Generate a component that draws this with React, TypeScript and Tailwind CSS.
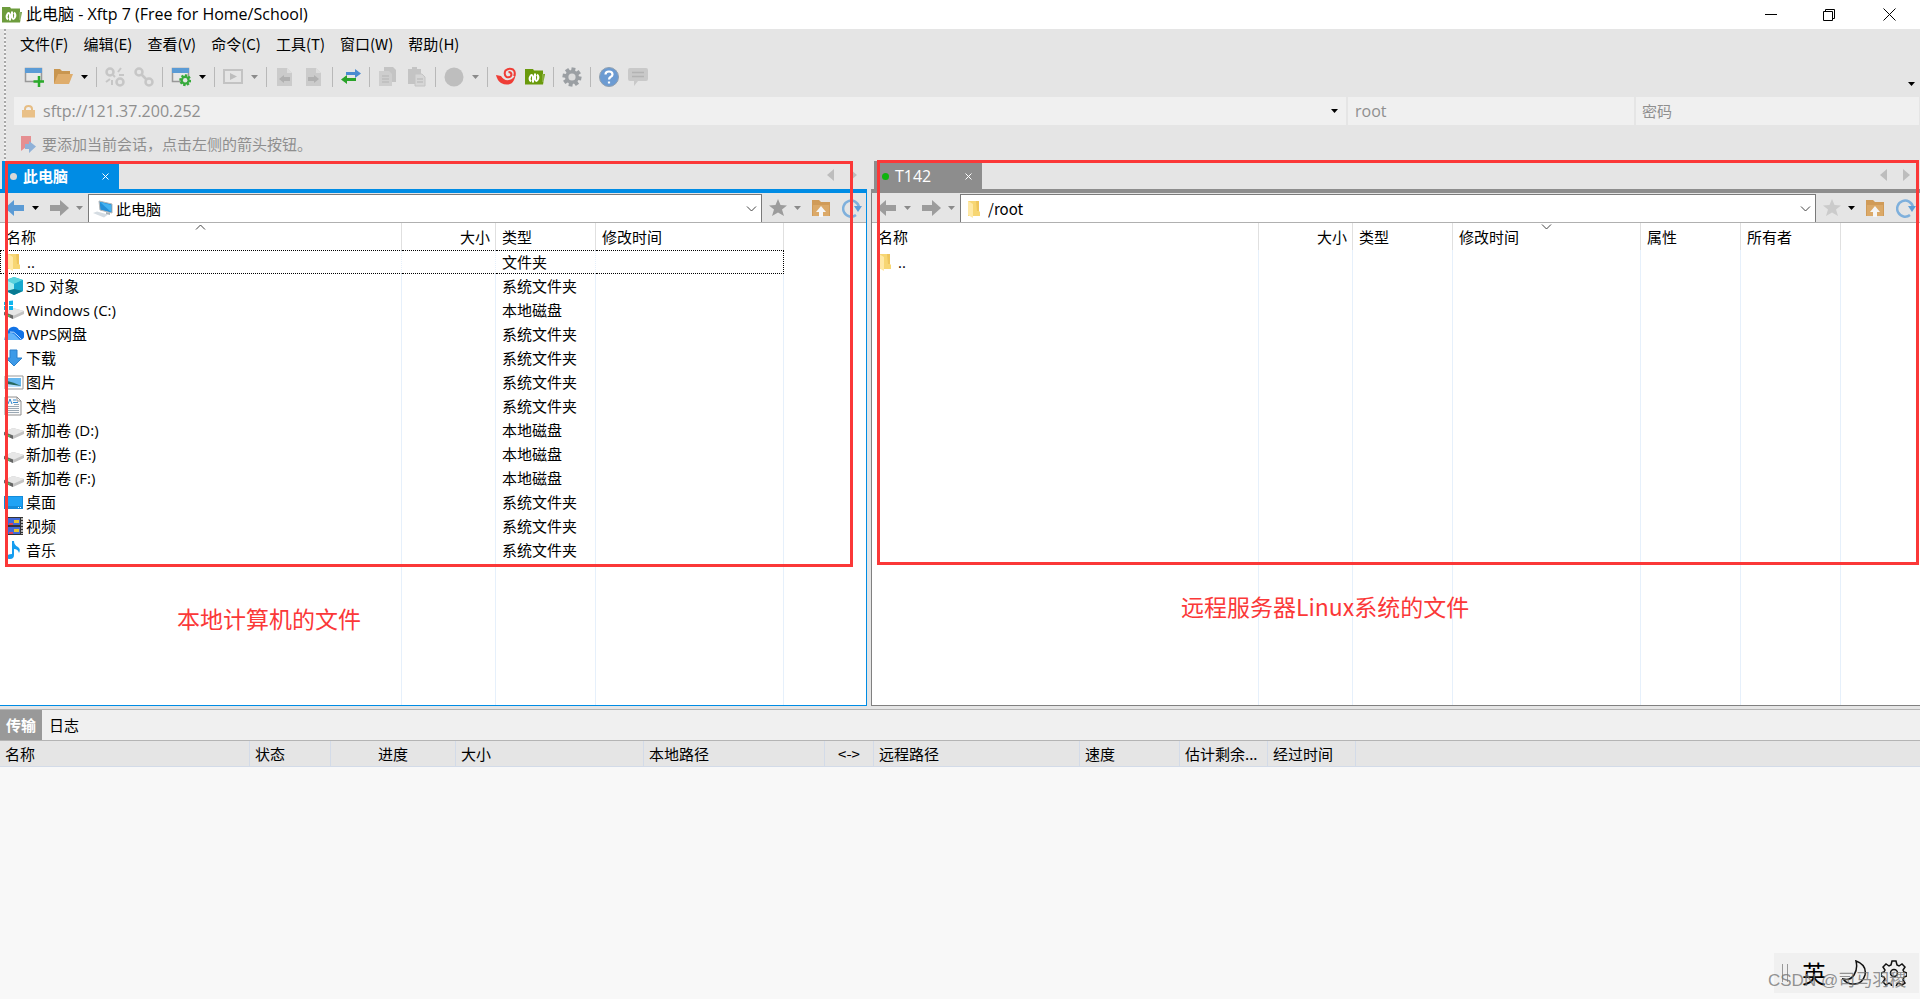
import React from "react";

const menus = ["文件(F)", "编辑(E)", "查看(V)", "命令(C)", "工具(T)", "窗口(W)", "帮助(H)"];

const localFiles = [
  { name: "..", type: "文件夹", icon: "folder" },
  { name: "3D 对象", type: "系统文件夹", icon: "cube" },
  { name: "Windows (C:)", type: "本地磁盘", icon: "windisk" },
  { name: "WPS网盘", type: "系统文件夹", icon: "cloud" },
  { name: "下载", type: "系统文件夹", icon: "download" },
  { name: "图片", type: "系统文件夹", icon: "picture" },
  { name: "文档", type: "系统文件夹", icon: "document" },
  { name: "新加卷 (D:)", type: "本地磁盘", icon: "disk" },
  { name: "新加卷 (E:)", type: "本地磁盘", icon: "disk" },
  { name: "新加卷 (F:)", type: "本地磁盘", icon: "disk" },
  { name: "桌面", type: "系统文件夹", icon: "desktop" },
  { name: "视频", type: "系统文件夹", icon: "video" },
  { name: "音乐", type: "系统文件夹", icon: "music" },
];

const remoteFiles = [{ name: "..", type: "", icon: "folder" }];

const localColumns = [
  { title: "名称", width: "w-[402px]", sort: "up" },
  { title: "大小", width: "w-[94px]", right: true },
  { title: "类型", width: "w-[100px]" },
  { title: "修改时间", width: "w-[188px]" },
];

const remoteColumns = [
  { title: "名称", width: "w-[387px]" },
  { title: "大小", width: "w-[94px]", right: true },
  { title: "类型", width: "w-[100px]" },
  { title: "修改时间", width: "w-[188px]", sort: "down" },
  { title: "属性", width: "w-[100px]" },
  { title: "所有者", width: "w-[100px]" },
];

const transferColumns = [
  { title: "名称", style: "w-[250px] pl-[5px] text-left" },
  { title: "状态", style: "w-[81px] pl-[5px] text-left" },
  { title: "进度", style: "w-[125px] text-center" },
  { title: "大小", style: "w-[188px] pl-[5px] text-left" },
  { title: "本地路径", style: "w-[181px] pl-[5px] text-left" },
  { title: "<->", style: "w-[49px] text-center" },
  { title: "远程路径", style: "w-[206px] pl-[5px] text-left" },
  { title: "速度", style: "w-[100px] pl-[5px] text-left" },
  { title: "估计剩余...", style: "w-[88px] pl-[5px] text-left" },
  { title: "经过时间", style: "w-[88px] pl-[5px] text-left" },
];

function Icon({ children, size = 20 }: { children: React.ReactNode; size?: number }) {
  return (
    <svg width={size} height={size} viewBox="0 0 20 20" fill="none" className="shrink-0">
      {children}
    </svg>
  );
}

function Gear({ color, hole }: { color: string; hole: string }) {
  return (
    <>
      {[0, 45, 90, 135].map((a) => (
        <rect key={a} x="8" y="0.5" width="4" height="19" fill={color} transform={`rotate(${a + 10} 10 10)`} />
      ))}
      <circle cx="10" cy="10" r="7" fill={color} />
      <circle cx="10" cy="10" r="3.6" fill={hole} />
    </>
  );
}

function FtpFolder({ color }: { color: string }) {
  return (
    <>
      <path d="M0 2h8l1 1.500h9V7h2l-2 10.500H0z" fill={color} />
      <path d="M18 7v8" stroke="#fff" strokeOpacity=".4" />
      <path d="M8 15.500V9.500Q7 7 5.500 9q-2 3 .5 5.500" stroke="#fff" strokeWidth="2" />
      <path d="M10 6.500v6q1 2.500 2.500.5 2-3-.5-5.500" stroke="#fff" strokeWidth="2" />
    </>
  );
}

function Disk() {
  return (
    <>
      <path d="M0 12l9-4 11 3v3l-11 5L0 15z" fill="#c3c3c3" />
      <path d="M0 12l9-4 11 3-10 4.500z" fill="#e7e7e7" />
      <path d="M0 12l9 3.500v3.500L0 15z" fill="#666" />
      <path d="M4 15.500l2 .7" stroke="#55c05b" strokeWidth="1.500" />
    </>
  );
}

function FileIcon({ name }: { name: string }) {
  return (
    <Icon>
      {name === "folder" && (
        <>
          <path d="M3 2h11v10l1 1v4H3z" fill="#f7d673" />
          <path d="M3 2l5 3v14l-5-3z" fill="#ffe9a6" />
          <path d="M11 2h3v10h-2z" fill="#eec55c" />
        </>
      )}
      {name === "cube" && (
        <>
          <path d="M10 1l9 3v11l-9 4-8-4V4z" fill="#1fb5cd" />
          <path d="M10 1l9 3-9 4-8-4z" fill="#59d3de" />
          <path d="M2 4l8 4v6l-8 1z" fill="#a8eef0" />
          <path d="M19 4l-9 4v6l9 1z" fill="#17a9cf" />
          <path d="M2 15l8-2 9 2-9 4z" fill="#087a92" />
        </>
      )}
      {name === "windisk" && (
        <>
          <Disk />
          <path d="M0 2l4-.5V5H0zM5 1l4-.5V5H5zM0 6h4v4H0zM5 6h4v4H5z" fill="#10b5ee" />
        </>
      )}
      {name === "disk" && <Disk />}
      {name === "cloud" && (
        <>
          <path d="M5 16a5 5 0 0 1-1-9 6 6 0 0 1 11-1 5 5 0 0 1 1 10z" fill="#1273e6" />
          <path d="M0 16q1-7 7-7 3 0 5 3l4 4z" fill="#63b4fa" />
          <path d="M6 8q4-1 7 3l4 4" stroke="#c2e2ff" />
        </>
      )}
      {name === "download" && <path d="M6 2h7v8h5l-8 8-8-8h4z" fill="#3d9ae8" stroke="#2b7fca" />}
      {name === "picture" && (
        <>
          <path d="M1 4h18v13H1z" fill="#fff" stroke="#999" />
          <path d="M3 6h14v9H3z" fill="#66b7ee" />
          <path d="M3 9q6 1 14 5v1H3z" fill="#27685e" />
          <path d="M3 12l14 2v1H3z" fill="#b8dfff" />
        </>
      )}
      {name === "document" && (
        <>
          <path d="M1 1h12l4 4v14H1z" fill="#fafafa" stroke="#909090" />
          <path d="M13 1v4h4" stroke="#909090" />
          <path d="M3 10.500h12M3 12.500h12M3 14.500h12M3 16.500h12M10 8.500h5" stroke="#9aa8b4" />
          <path d="M4 8l2-5 2 5M9 4h3M9 6.500h5" stroke="#3188ce" />
        </>
      )}
      {name === "desktop" && (
        <>
          <path d="M0 4h19v13H0z" fill="#148cda" />
          <path d="M1 5h17v9H1z" fill="#20a3f5" />
          <path d="M14 15.500h1M16 15.500h1" stroke="#fff" />
        </>
      )}
      {name === "video" && (
        <>
          <path d="M1 1h18v18H1z" fill="#333" />
          <path d="M3 2h13v7H3zM3 11h13v7H3z" fill="#4269d8" />
          <path d="M10 4h5v3h-5zM10 13h5v3h-5z" fill="#e5c32f" />
          <path d="M5 7h4v2H5zM5 16h4v2H5z" fill="#df4256" />
          <path d="M18 2v16" stroke="#ddd" strokeWidth="1.500" strokeDasharray="2 1" />
        </>
      )}
      {name === "music" && (
        <path d="M8 1h2q0 4 4 6 3 2 1 6-1-4-5-4v6q0 4-4 4-3 0-3-2 0-3 5-3z" fill="#159df0" />
      )}
    </Icon>
  );
}

function ToolIcon({ name }: { name: string }) {
  return (
    <Icon>
      {(name === "new" || name === "props") && (
        <>
          <path d="M1.500 1.500h16v13h-16z" fill="#e8e8e8" stroke="#999" strokeWidth="1.500" />
          <path d="M1 1h17v5H1z" fill="#5b9bd5" />
          {name === "new" ? (
            <path d="M15 9v11M9.500 14.500h11" stroke="#2bab2b" strokeWidth="2.500" />
          ) : (
            <g transform="translate(8 7) scale(.62)">
              <Gear color="#37ab3c" hole="#e5e5e5" />
            </g>
          )}
        </>
      )}
      {name === "open" && (
        <>
          <path d="M1 17V2h6l2 2h8v4" fill="#c99650" />
          <path d="M1 17L5 7h15l-4 10z" fill="#dfad6c" />
        </>
      )}
      {(name === "link" || name === "unlink") && (
        <g stroke="#c6c6c6" strokeWidth="2.500">
          <circle cx="5" cy="5" r="3.500" />
          <circle cx="15" cy="15" r="3.500" />
          {name === "link" ? (
            <path d="M7 7l6 6" />
          ) : (
            <path d="M8 8l2 2M13 5l3-4M14 8h5M5 12l-4 3M7 13v5" strokeWidth="2" />
          )}
        </g>
      )}
      {name === "play" && (
        <>
          <rect x="1" y="3" width="18" height="13" stroke="#c3c3c3" strokeWidth="2" />
          <path d="M7 6l7 3.500L7 13z" fill="#bdbdbd" />
        </>
      )}
      {(name === "docleft" || name === "docright") && (
        <>
          <path d="M2 1h10l5 5v13H2z" fill="#cbcbcb" />
          <path d="M12 1v5h5" fill="#dedede" />
          {name === "docleft" ? (
            <path d="M4 12l5-4v2h6v4H9v2z" fill="#b0b0b0" />
          ) : (
            <path d="M15 12l-5-4v2H4v4h6v2z" fill="#b0b0b0" />
          )}
        </>
      )}
      {name === "transfer" && (
        <>
          <path d="M5 5h9V2l6 4.500-6 4.500V8H5z" fill="#4a8bd0" />
          <path d="M15 11H6V8l-6 4.500L6 17v-3h9z" fill="#29a329" />
        </>
      )}
      {name === "copy" && (
        <>
          <path d="M6 0h9l3 3v12H6z" fill="#c4c4c4" />
          <path d="M1 4h10l3 3v12H1z" fill="#cecece" />
          <path d="M4 9h7M4 12h7M4 15h7" stroke="#b4b4b4" />
        </>
      )}
      {name === "paste" && (
        <>
          <path d="M1 2h13v15H1zM5 0h5v4H5z" fill="#c4c4c4" />
          <path d="M8 7h7l3 3v9H8z" fill="#d6d6d6" stroke="#c4c4c4" />
          <path d="M10 12h6M10 15h6" stroke="#b4b4b4" />
        </>
      )}
      {name === "globe" && <circle cx="10" cy="10" r="9.500" fill="#bebebe" />}
      {name === "swirl" && (
        <>
          <path d="M0 8l5 1q3 5 8 4 5-1 7-7-1 7-4 10-5 3-11 0Q1 13 0 8z" fill="#ef3d36" />
          <path
            d="M18 9q2-4-1-6.500-4-2-7.500 1-2 4 1 6.500 4 1 5-2 0-3-3-3"
            stroke="#ef3d36"
            strokeWidth="2"
          />
        </>
      )}
      {name === "ftp" && <FtpFolder color="#6a9a0c" />}
      {name === "gear" && <Gear color="#9b9fa3" hole="#dcdcdc" />}
      {name === "help" && (
        <>
          <circle cx="10" cy="10" r="9.500" fill="#6c9bd2" stroke="#8f9fb0" />
          <path d="M6.500 7.500q0-3 3.500-3t3.500 3q0 1.500-2 2.500-1.500 1-1.500 2.500M10 14.500v2" stroke="#fff" strokeWidth="2.200" />
        </>
      )}
      {name === "chat" && (
        <>
          <path d="M2 1h16q2 0 2 2v9q0 2-2 2h-8l-4 5v-5H2q-2 0-2-2V3q0-2 2-2z" fill="#c9c9c9" />
          <path d="M4 5.500h12M4 9.500h12" stroke="#b3b3b3" strokeWidth="1.500" />
        </>
      )}
      {name === "back" && <path d="M0 10l9-8v5h10v6H9v5z" fill="currentColor" />}
      {name === "forward" && <path d="M20 10l-9-8v5H1v6h10v5z" fill="currentColor" />}
      {name === "star" && <path d="M10 1l2.500 6 6.500.5-5 4 2 6.500-6-3.500L4 18l2-6.500-5-4L7.500 7z" fill="currentColor" />}
      {name === "up" && (
        <>
          <path d="M1 2h7l2 2h9v14H1z" fill="#d09b58" />
          <path d="M2 7h16v11H2z" fill="#dba968" />
          <path d="M10 8l5 6h-3v5H8v-5H5z" fill="#f5f5f5" />
        </>
      )}
      {name === "refresh" && (
        <>
          <path d="M14 17a8 8 0 1 1 3-8" stroke="#7fb0dc" strokeWidth="2.500" />
          <path d="M12 8h8l-4 6z" fill="#5f9fd8" />
        </>
      )}
    </Icon>
  );
}

function Caret({ dim = false, width = "w-[15px]" }: { dim?: boolean; width?: string }) {
  return (
    <button aria-label="更多" className={`flex ${width} shrink-0 justify-center ${dim ? "text-[#8a8a8a]" : "text-black"}`}>
      <svg width="7" height="4" viewBox="0 0 7 4">
        <path d="M0 0h7L3.500 4z" fill="currentColor" />
      </svg>
    </button>
  );
}

function Tool({ name, label }: { name: string; label: string }) {
  return (
    <button aria-label={label} className="flex w-[29px] shrink-0 justify-center">
      <ToolIcon name={name} />
    </button>
  );
}

function Separator() {
  return (
    <div className="flex w-2 justify-center">
      <div className="h-5 w-px bg-[#b8b8b8]" />
    </div>
  );
}

function Chevron({ up = false }: { up?: boolean }) {
  return (
    <svg width="11" height="6" viewBox="0 0 11 6" fill="none" stroke="#444">
      {up ? <path d="M1 5.500l4.500-4.500L10 5.500" /> : <path d="M1 .5L5.500 5 10 .5" />}
    </svg>
  );
}

function FileTable({ columns, files, focused = false }: any) {
  return (
    <table className="h-full w-full table-fixed border-separate border-spacing-0">
      <thead>
        <tr className="h-[27px]">
          {columns.map((col: any) => (
            <th
              key={col.title}
              scope="col"
              className={`relative border-r border-[#e0e0e0] pl-1.5 pr-[5px] font-normal ${col.width} ${
                col.right ? "text-right" : "text-left"
              }`}
            >
              {col.title}
              {col.sort && (
                <span className="absolute inset-x-0 top-px flex justify-center">
                  <Chevron up={col.sort === "up"} />
                </span>
              )}
            </th>
          ))}
          <th aria-hidden="true" />
        </tr>
      </thead>
      <tbody>
        {files.map((file: any, index: number) => {
          const focus = focused && index === 0;
          const line = focus ? "border-y border-y-black border-dotted" : "";
          return (
            <tr key={file.name} className="h-6">
              <td className={`border-r border-r-[#e6f0fb] ${line} ${focus ? "border-l border-l-black" : ""}`}>
                <div className="flex items-center gap-0.5 pl-1">
                  <FileIcon name={file.icon} />
                  <span className="whitespace-pre font-['Open_Sans','Noto_Sans_CJK_SC',sans-serif]">{file.name}</span>
                </div>
              </td>
              <td className={`border-r border-r-[#e6f0fb] ${line}`} />
              <td className={`border-r border-r-[#e6f0fb] pl-1.5 ${line}`}>{file.type}</td>
              {columns.slice(3).map((col: any) => (
                <td key={col.title} className={`border-r ${focus ? "border-r-black" : "border-r-[#e6f0fb]"} ${line}`} />
              ))}
              <td />
            </tr>
          );
        })}
        <tr aria-hidden="true">
          {columns.map((col: any) => (
            <td key={col.title} className="border-r border-[#e6f0fb]" />
          ))}
          <td />
        </tr>
      </tbody>
    </table>
  );
}

function Pane({ local, children }: { local: boolean; children: React.ReactNode }) {
  return (
    <section className={`relative flex min-w-0 flex-col ${local ? "flex-[867]" : "flex-[1049]"}`}>
      <div
        className={`flex h-8 shrink-0 items-stretch justify-between border-b-4 ${
          local ? "border-[#008ce4]" : "border-[#8d8d8d]"
        }`}
      >
        <div
          className={`flex items-center pl-2 pt-0.5 text-white ${
            local ? "ml-0.5 w-[117px] bg-[#008ce4] font-bold" : "ml-[3px] w-[108px] bg-[#8d8d8d]"
          }`}
        >
          <span className={`mr-1.5 size-[7px] rounded-full ${local ? "bg-[#d8d8d8]" : "bg-[#0db40d]"}`} />
          <button className={`flex-1 text-left ${local ? "" : "font-['Open_Sans',sans-serif] text-base"}`}>
            {local ? "此电脑" : "T142"}
          </button>
          <button aria-label="关闭标签" className="mr-2.5">
            <svg width="7" height="7" viewBox="0 0 7 7" stroke="#fff">
              <path d="M.5.5l6 6M6.500.5l-6 6" />
            </svg>
          </button>
        </div>
        <div className="flex items-center gap-4 pr-2.5 text-[#bdbdbd]">
          <button aria-label="上一个">
            <svg width="7" height="12" viewBox="0 0 7 12">
              <path d="M7 0v12L0 6z" fill="currentColor" />
            </svg>
          </button>
          <button aria-label="下一个">
            <svg width="7" height="12" viewBox="0 0 7 12">
              <path d="M0 0v12l7-6z" fill="currentColor" />
            </svg>
          </button>
        </div>
      </div>
      <div
        className={`flex min-h-0 flex-1 flex-col border-b bg-white ${
          local ? "border-r border-[#008ce4]" : "border-l border-[#808080]"
        }`}
      >
        <div className="flex h-[30px] shrink-0 items-center border-b border-[#b0b0b0] bg-[#e5e5e5]">
          <div className="flex w-[88px] items-center pl-0.5 text-[#9c9c9c]">
            <button aria-label="后退" className={`flex w-[26px] justify-center ${local ? "text-[#5b9bd5]" : ""}`}>
              <ToolIcon name="back" />
            </button>
            <Caret dim={!local} />
            <button aria-label="前进" className="flex w-8 justify-center">
              <ToolIcon name="forward" />
            </button>
            <Caret dim width="w-2" />
          </div>
          <div className="mt-px flex h-7 flex-1 items-center border-x border-t border-[#7a7a7a] bg-white pl-1 pr-1">
            {local ? (
              <Icon>
                <path d="M6 2l13 3v9L7 11z" fill="#248fd8" stroke="#b7b7b7" />
                <path d="M7 3l11 3v7z" fill="#45b3f2" />
                <path d="M0 14l4-1.500 11 3-4 3z" fill="#d5dce2" />
                <path d="M13 13l4 1v2l-4-1z" fill="#a8b3ba" />
              </Icon>
            ) : (
              <FileIcon name="folder" />
            )}
            <input
              aria-label={local ? "本地路径" : "远程路径"}
              defaultValue={local ? "此电脑" : "/root"}
              className="min-w-0 flex-1 bg-transparent pl-[3px] outline-none"
            />
            <button aria-label="展开">
              <Chevron />
            </button>
          </div>
          <div className="flex w-[104px] items-center">
            <button aria-label="收藏" className={`flex w-8 justify-center ${local ? "text-[#9c9c9c]" : "text-[#cbcbcb]"}`}>
              <ToolIcon name="star" />
            </button>
            <Caret dim={local} width="w-[7px]" />
            <button aria-label="上级目录" className="flex w-10 justify-center">
              <ToolIcon name="up" />
            </button>
            <button aria-label="刷新" className="flex w-[22px] justify-center">
              <ToolIcon name="refresh" />
            </button>
          </div>
        </div>
        <div className="min-h-0 flex-1">{children}</div>
      </div>
    </section>
  );
}

export default function App() {
  return (
    <div className="relative flex min-h-screen flex-col bg-[#e5e5e5] font-['Noto_Sans_CJK_SC',sans-serif] text-[15px] leading-[22px] text-black">
      <header className="flex h-[29px] shrink-0 items-center bg-white pl-0.5">
        <Icon>
          <FtpFolder color="#6d9c3d" />
        </Icon>
        <h1 className="flex-1 pb-0.5 pl-1 font-['Open_Sans','Noto_Sans_CJK_SC',sans-serif] text-base leading-6">
          此电脑 - Xftp 7 (Free for Home/School)
        </h1>
        <div className="flex">
          <button aria-label="最小化" className="flex w-[58px] items-center justify-center">
            <svg width="12" height="12" viewBox="0 0 12 12" stroke="#000">
              <path d="M0 5.500h12" />
            </svg>
          </button>
          <button aria-label="还原" className="flex w-[58px] items-center justify-center">
            <svg width="12" height="12" viewBox="0 0 12 12" fill="none" stroke="#000">
              <path d="M.5 2.500h9v9h-9zM2.500 2.500v-2h9v9h-2" />
            </svg>
          </button>
          <button aria-label="关闭" className="flex w-[62px] items-center justify-center">
            <svg width="13" height="13" viewBox="0 0 13 13" stroke="#000">
              <path d="M.5.5l12 12M12.500.5l-12 12" />
            </svg>
          </button>
        </div>
      </header>

      <div className="flex h-[132px] shrink-0">
        <div className="ml-1 w-0.5 bg-[repeating-linear-gradient(to_bottom,#a8a8a8_0_2px,#f4f4f4_2px_4px)]" />
        <div className="flex min-w-0 flex-1 flex-col">
          <nav className="flex h-[30px] items-center gap-[15px] pl-3.5">
            {menus.map((menu) => (
              <button key={menu}>{menu}</button>
            ))}
          </nav>
          <div className="flex h-9 items-center pl-[13px]">
            <Tool name="new" label="新建" />
            <Tool name="open" label="打开" />
            <Caret />
            <Separator />
            <Tool name="unlink" label="断开" />
            <Tool name="link" label="重新连接" />
            <Separator />
            <Tool name="props" label="属性" />
            <Caret />
            <Separator />
            <Tool name="play" label="运行" />
            <Caret dim />
            <Separator />
            <Tool name="docleft" label="向左传输" />
            <Tool name="docright" label="向右传输" />
            <Separator />
            <Tool name="transfer" label="传输" />
            <Separator />
            <Tool name="copy" label="复制" />
            <Tool name="paste" label="粘贴" />
            <Separator />
            <Tool name="globe" label="编码" />
            <Caret dim />
            <Separator />
            <Tool name="swirl" label="Xshell" />
            <Tool name="ftp" label="Xftp" />
            <Separator />
            <Tool name="gear" label="选项" />
            <Separator />
            <Tool name="help" label="帮助" />
            <Tool name="chat" label="反馈" />
            <div className="flex flex-1 justify-end pr-px pt-3.5">
              <Caret />
            </div>
          </div>
          <form className="mt-0.5 flex h-7 gap-0.5 pl-2 pr-px font-['Open_Sans','Noto_Sans_CJK_SC',sans-serif] text-base text-[#8f8f8f]">
            <div className="flex flex-[1320] items-center bg-[#f0f0f0] pl-2 pr-1">
              <svg width="13" height="13" viewBox="0 0 13 13" fill="none">
                <path d="M3 6V4q0-3 3.500-3T10 4v2" stroke="#e6bd84" strokeWidth="2" />
                <path d="M0 5h13v7.500H0z" fill="#e9c087" />
              </svg>
              <input
                aria-label="地址"
                defaultValue="sftp://121.37.200.252"
                className="min-w-0 flex-1 bg-transparent pl-2 outline-none"
              />
              <Caret />
            </div>
            <input aria-label="用户名" defaultValue="root" className="min-w-0 flex-[279] bg-[#f0f0f0] pl-[7px] outline-none" />
            <input
              aria-label="密码"
              placeholder="密码"
              className="min-w-0 flex-[277] bg-[#f0f0f0] pl-1.5 text-[15px] outline-none placeholder:text-[#8f8f8f]"
            />
          </form>
          <div className="flex flex-1 items-center gap-1.5 pl-3.5 pt-0.5 text-[#8f8f8f]">
            <svg width="16" height="17" viewBox="0 0 16 17">
              <path d="M1 0h10v7l-5 4-5 4z" fill="#e58f91" />
              <path d="M5 8h4V5l7 5.500L9 17v-4H5z" fill="#8fb1d8" />
            </svg>
            <p>要添加当前会话，点击左侧的箭头按钮。</p>
          </div>
        </div>
      </div>

      <main className="flex min-h-[420px] grow-[546] basis-0 gap-1">
        <Pane local>
          <FileTable columns={localColumns} files={localFiles} focused />
          <div className="pointer-events-none absolute bottom-[139px] left-[5px] right-3.5 top-0 border-[3px] border-[#fb3838]" />
          <p className="absolute left-[177px] top-[440px] text-[23px] leading-[34px] text-[#fb3838]">本地计算机的文件</p>
        </Pane>
        <Pane local={false}>
          <FileTable columns={remoteColumns} files={remoteFiles} />
          <div className="pointer-events-none absolute -top-px bottom-[141px] left-1.5 right-px border-[3px] border-[#fb3838]" />
          <p className="absolute left-[310px] top-[428px] text-[23px] leading-[34px] text-[#fb3838]">
            远程服务器Linux系统的文件
          </p>
        </Pane>
      </main>

      <section className="mt-[3px] flex min-h-[200px] grow-[289] basis-0 flex-col border-t border-[#b4b4b4] bg-[#f8f8f8]">
        <div className="flex h-[31px] shrink-0 border-b border-[#b4b4b4] bg-[#f0f0f0]">
          <button className="w-[42px] bg-[#999] font-bold text-white">传输</button>
          <button className="px-[7px]">日志</button>
        </div>
        <table className="w-full table-fixed border-separate border-spacing-0 bg-[#e5e5e5]">
          <thead>
            <tr className="h-[26px]">
              {transferColumns.map((col) => (
                <th
                  key={col.title}
                  scope="col"
                  className={`whitespace-nowrap border-b border-r border-[#d3dbe8] font-normal ${col.style}`}
                >
                  {col.title}
                </th>
              ))}
              <th aria-hidden="true" className="border-b border-[#d3dbe8]" />
            </tr>
          </thead>
        </table>
      </section>

      <aside className="absolute bottom-1.5 right-px flex h-10 w-[145px] items-center bg-[#f0f0f0] pl-2">
        <div className="h-[18px] w-1.5 border-x border-[#999]" />
        <button className="ml-3.5 text-2xl leading-8">英</button>
        <button aria-label="月亮模式" className="ml-4">
          <svg width="25" height="26" viewBox="0 0 25 26" fill="none" stroke="#111" strokeWidth="1.500">
            <path d="M14 1q11 4 9 14-3 10-12 9-6 0-10-5 7 2 11-4 4-6 2-14z" />
          </svg>
        </button>
        <button aria-label="设置" className="ml-3.5">
          <svg width="26" height="26" viewBox="0 0 26 26" fill="none" stroke="#111" strokeWidth="1.500">
            <path d="M11 1h4l1 4 2 1 3-2 3 3-2 3 1 2 3 1v3l-3 1-1 3 2 3-3 2-3-2-2 1-1 3h-4l-1-3-2-1-3 2-3-3 2-3-1-2-3-1v-3l3-1 1-2-2-3 3-3 3 2 2-1z" />
            <circle cx="13" cy="13" r="3.500" />
          </svg>
        </button>
        <p className="pointer-events-none absolute -left-1.5 top-4 whitespace-nowrap font-['Liberation_Sans','Noto_Sans_CJK_SC',sans-serif] text-[17px] leading-6 text-[#777]/80">
          CSDN @司马羽稷
        </p>
      </aside>
    </div>
  );
}
